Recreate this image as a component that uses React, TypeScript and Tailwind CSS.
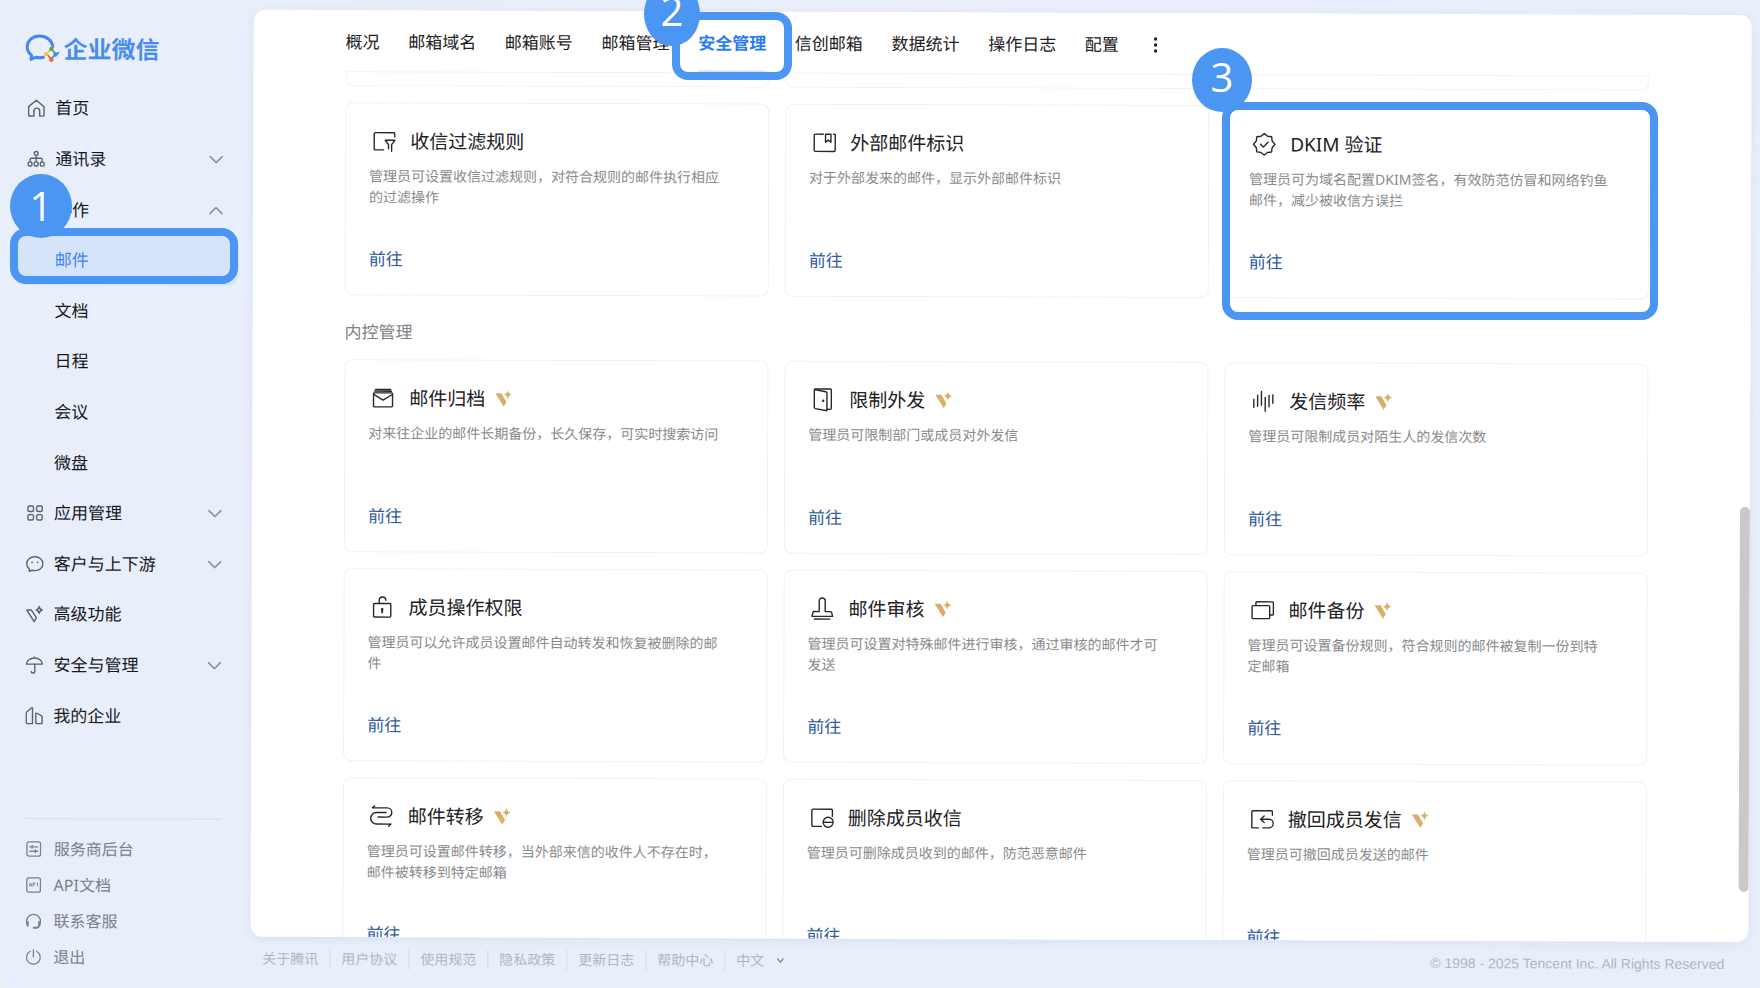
import type { ReactNode } from "react";

const FONT = "font-['Noto_Sans','Noto_Sans_CJK_SC',sans-serif]";

/* ---------- icons ---------- */

function Icon24({ children }: { children: ReactNode }) {
  return (
    <svg
      viewBox="0 0 24 24"
      className="size-6 shrink-0"
      fill="none"
      stroke="#24272c"
      strokeWidth="1.4"
      strokeLinecap="round"
      strokeLinejoin="round"
      aria-hidden="true"
    >
      {children}
    </svg>
  );
}

function Icon18({ children }: { children: ReactNode }) {
  return (
    <svg
      viewBox="0 0 18 18"
      className="size-[18px] shrink-0"
      fill="none"
      stroke="#5c636e"
      strokeWidth="1.4"
      strokeLinecap="round"
      strokeLinejoin="round"
      aria-hidden="true"
    >
      {children}
    </svg>
  );
}

function Icon16({ children }: { children: ReactNode }) {
  return (
    <svg
      viewBox="0 0 16 16"
      className="size-4 shrink-0"
      fill="none"
      stroke="#7a828e"
      strokeWidth="1.3"
      strokeLinecap="round"
      strokeLinejoin="round"
      aria-hidden="true"
    >
      {children}
    </svg>
  );
}

function GoldV() {
  return (
    <svg viewBox="0 0 17 19" className="h-[19px] w-[17px] shrink-0" fill="#d9ae68" aria-hidden="true">
      <path d="M0 3.6h6l5.200 8.800-2.900 4.500z" />
      <path d="M12.500 0c.5 3 1.500 4.300 4.500 4.900-3 .6-4 1.900-4.500 4.900-.5-3-1.500-4.300-4.500-4.900 3-.6 4-1.900 4.500-4.900z" />
    </svg>
  );
}

function Chevron({ up = false }: { up?: boolean }) {
  return (
    <svg
      viewBox="0 0 14 8"
      className="ml-auto h-2 w-3.5"
      fill="none"
      stroke="#8f96a1"
      strokeWidth="1.700"
      strokeLinecap="round"
      strokeLinejoin="round"
      aria-hidden="true"
    >
      <path d={up ? "M1 7l6-6 6 6" : "M1 1l6 6 6-6"} />
    </svg>
  );
}

function Logo() {
  return (
    <svg viewBox="0 0 34 29" className="h-[29px] w-[34px]" fill="none" aria-hidden="true">
      <path
        d="M27.2 12.3C26.4 6.3 20.9 2 14 2 7 2 1.600 6.800 1.600 12.800c0 3.500 1.800 6.500 4.500 8.500L5.500 25.400l4.600-2.200c1.300.3 2.500.5 3.900.5 1.400 0 2.700-.2 3.900-.5"
        stroke="#4489ee"
        strokeWidth="3"
        strokeLinecap="round"
        strokeLinejoin="round"
      />
      <g strokeWidth="1.700" strokeLinecap="round">
        <path d="M26.500 15.800l3 2.900" stroke="#4caf3c" />
        <path d="M29.700 20.600l-2.900 3" stroke="#4489ee" />
        <path d="M25.300 24.200l-2.900-3" stroke="#f06a35" />
        <path d="M22 18.700l2.800-2.800" stroke="#f8c044" />
      </g>
      <circle cx="25.800" cy="14.800" r="2.200" fill="#4caf3c" />
      <path d="M28 19.800l5.600-1.700-3.400 4.200z" fill="#4489ee" stroke="#4489ee" strokeLinejoin="round" />
      <circle cx="25.800" cy="25.500" r="2.300" fill="#f06a35" />
      <circle cx="20.300" cy="19.900" r="2.100" fill="#f8c044" />
    </svg>
  );
}

const sideIcons = {
  home: (
    <Icon18>
      <path d="M1.300 7.600 9 1.200l7.700 6.400v8.800a.6.600 0 0 1-.6.600h-3.700v-5a2.900 2.900 0 0 0-5.800 0" />
      <path d="M6.600 12v5H1.900a.6.600 0 0 1-.6-.6V7.600" />
    </Icon18>
  ),
  org: (
    <Icon18>
      <circle cx="9" cy="3.400" r="1.900" />
      <path d="M9 5.300v5.500M3 10.800V9.300c0-.7.400-1.100 1.100-1.100h9.800c.7 0 1.100.4 1.100 1.100v1.500" />
      <rect x="1" y="12" width="3.800" height="4" rx="1.200" />
      <rect x="7.100" y="12" width="3.800" height="4" rx="1.200" />
      <rect x="13.200" y="12" width="3.800" height="4" rx="1.200" />
    </Icon18>
  ),
  people: (
    <Icon18>
      <path d="M2 4h14M2 9h14M2 14h14" />
    </Icon18>
  ),
  apps: (
    <Icon18>
      <rect x="2" y="2" width="5.600" height="5.400" rx="1.500" />
      <rect x="10.700" y="2" width="5.600" height="5.400" rx="1.500" />
      <rect x="2" y="10.600" width="5.600" height="5.400" rx="1.500" />
      <rect x="10.700" y="10.600" width="5.600" height="5.400" rx="1.500" />
    </Icon18>
  ),
  chat: (
    <Icon18>
      <path d="M3.600 16.200V14C2 12.800 1 11 1 8.700 1 4.700 4.400 1.700 9 1.700s8.200 3 8.200 7-3.600 6.900-8.200 6.900c-1 0-1.800-.1-2.700-.4z" />
      <circle cx="6.300" cy="7.300" r=".9" fill="#5c636e" stroke="none" />
      <circle cx="11.900" cy="7.300" r=".9" fill="#5c636e" stroke="none" />
    </Icon18>
  ),
  vip: (
    <Icon18>
      <path d="M1.200 5h4.600l5 7.500-2.200 4z" />
      <path d="M13.600 1.500c.3 2 .9 2.900 3 3.400-2.100.5-2.700 1.400-3 3.400-.3-2-.9-2.900-3-3.400 2.100-.5 2.700-1.400 3-3.400z" />
    </Icon18>
  ),
  umbrella: (
    <Icon18>
      <path d="M.9 8C1.200 4.500 4.700 2 9 2s7.800 2.500 8.100 6zM9 .9V2M9.400 8v7.500c0 .9-.7 1.500-1.700 1.500s-1.800-.6-1.800-1.500" />
    </Icon18>
  ),
  buildings: (
    <Icon18>
      <path d="M7.300 16.600H1.900c-.5 0-.9-.4-.9-.9V6.200c0-.5.200-.9.500-1.200L6.200.9c.5-.4 1.100-.1 1.100.5z" />
      <path d="M10.600 6.800v9c0 .5.400.8.800.8h4.700c.5 0 .8-.3.800-.8V9.900c0-.5-.2-.9-.6-1.100l-4.500-2.600c-.6-.3-1.200 0-1.200.6z" />
    </Icon18>
  ),
  sliders: (
    <Icon16>
      <rect x="1.200" y=".9" width="13.600" height="14.200" rx="2" />
      <path d="M4 5.800h8M4 10.200h8M6.300 4.300v3M9.700 8.700v3" />
    </Icon16>
  ),
  api: (
    <Icon16>
      <rect x="1.200" y=".9" width="13.600" height="14.200" rx="2" />
      <path d="M3.700 9l1.200-3.300L6.100 9M4.100 8h1.600M7.500 9V5.700h1c1.300 0 1.300 2 0 2h-1M11.800 5.700V9" strokeWidth=".9" />
    </Icon16>
  ),
  headset: (
    <Icon16>
      <path d="M1.800 12.400C1.300 11.300 1 10 1 8.600 1 4.600 4 1.400 8 1.400s7 3.200 7 7.200c0 1.400-.3 2.700-.8 3.800" />
      <path d="M2.400 8.800v3.800M13.600 8.800v3.400c0 1.700-1.500 2.500-3.200 2.500" strokeWidth="1.800" />
      <path d="M8.200 14.700h2" strokeWidth="1.800" />
    </Icon16>
  ),
  power: (
    <Icon16>
      <path d="M8 .8v7M4.800 2.200A6.900 6.900 0 1 0 11.200 2.200" />
    </Icon16>
  ),
};

const cardIcons = {
  filter: (
    <Icon24>
      <path d="M11.500 20.600H3a1 1 0 0 1-1-1V4.400a1 1 0 0 1 1-1h18.500a1 1 0 0 1 1 1v3.200" />
      <path d="M16.300 19.500v-4.200L13 11h9.600l-3.200 4.300V22" />
    </Icon24>
  ),
  mark: (
    <Icon24>
      <path d="M11 3.400H3a1 1 0 0 0-1 1v15.200a1 1 0 0 0 1 1h19a1 1 0 0 0 1-1V4.400a1 1 0 0 0-1-1h-.6" />
      <path d="M13.300 3.400h5.400v8.100L16 9.300l-2.700 2.200z" />
    </Icon24>
  ),
  badge: (
    <Icon24>
      <path d="M12 1.300l3.300 2.600 4.100.5.500 4.200 2.800 3.400-2.800 3.400-.5 4.200-4.100.5L12 22.700l-3.300-2.600-4.100-.5-.5-4.200L1.300 12l2.800-3.400.5-4.200 4.100-.5z" />
      <path d="M8.400 12l2.700 2.600 4.800-4.600" />
    </Icon24>
  ),
  archive: (
    <Icon24>
      <rect x="2.200" y="6.600" width="19" height="14" rx=".8" />
      <path d="M2.400 8.200l9.300 5.600L21 8.200M4.200 3.200h15M3.200 4.900h17" />
    </Icon24>
  ),
  door: (
    <Icon24>
      <path d="M3.500 1.200H19a1 1 0 0 1 1 1v18.300a1 1 0 0 1-1 1h-3.200" />
      <path d="M3 1.700l11.400 2.200c.8.200 1.200.6 1.200 1.400v17.600l-11.400-2c-.8-.2-1.200-.6-1.200-1.400z" />
      <circle cx="11.900" cy="13" r="1.200" fill="#24272c" stroke="none" />
    </Icon24>
  ),
  bars: (
    <Icon24>
      <path d="M2.500 10v8M6.300 6v11M10.100 2v14M13.900 8v14M17.700 6v11.500M21.500 5.500V14" />
    </Icon24>
  ),
  lock: (
    <Icon24>
      <rect x="3" y="8.200" width="17.200" height="13.600" rx="1" />
      <path d="M8.600 8V5a3.300 3.300 0 0 1 6.600 0" />
      <path d="M11.600 14.800v2.400" strokeWidth="1.800" />
      <circle cx="11.600" cy="14" r="1.300" fill="#24272c" stroke="none" />
    </Icon24>
  ),
  stamp: (
    <Icon24>
      <path d="M8.600 14.800V4.200a3 3 0 0 1 6 0v10.600h5.300c.6 0 .9.300 1.100.8l1 3.900H1.400l1-3.900c.1-.5.500-.8 1.100-.8z" />
      <path d="M3.800 22.300h15.600" />
    </Icon24>
  ),
  backup: (
    <Icon24>
      <rect x="1.500" y="7.300" width="17.600" height="13" rx=".9" />
      <path d="M5.300 7.200V4.400a.9.900 0 0 1 .9-.9h15.700a.9.900 0 0 1 .9.900v11.300a.9.900 0 0 1-.9.900h-2.700" />
    </Icon24>
  ),
  transfer: (
    <Icon24>
      <path d="M2.500 3.600h14.800a4.600 4.600 0 0 1 0 9.200H8.200M4.800 1.600l-2.300 2" />
      <path d="M16.200 8.200H6.600a5.800 5.800 0 0 0 0 11.600H21M18.800 21.900l2.300-2.100" />
    </Icon24>
  ),
  remove: (
    <Icon24>
      <path d="M11.500 20.600H3a1 1 0 0 1-1-1V4.400a1 1 0 0 1 1-1h18.500a1 1 0 0 1 1 1v6" />
      <circle cx="18.300" cy="16.500" r="5" />
      <path d="M13.500 16.500h9.600" />
    </Icon24>
  ),
  recall: (
    <Icon24>
      <path d="M8.500 20.600H3a1 1 0 0 1-1-1V4.400a1 1 0 0 1 1-1h18.500a1 1 0 0 1 1 1V8" />
      <path d="M14.300 8.600l-3.600 3.300 3.600 3.300M10.900 11.900h8.200a4.200 4.200 0 0 1 0 8.600h-6" />
    </Icon24>
  ),
};

/* ---------- data ---------- */

type SideItem = {
  label: string;
  icon?: keyof typeof sideIcons;
  chevron?: "up" | "down";
  active?: boolean;
};

const sideItems: SideItem[] = [
  { label: "首页", icon: "home" },
  { label: "通讯录", icon: "org", chevron: "down" },
  { label: "协作", icon: "people", chevron: "up" },
  { label: "邮件", active: true },
  { label: "文档" },
  { label: "日程" },
  { label: "会议" },
  { label: "微盘" },
  { label: "应用管理", icon: "apps", chevron: "down" },
  { label: "客户与上下游", icon: "chat", chevron: "down" },
  { label: "高级功能", icon: "vip" },
  { label: "安全与管理", icon: "umbrella", chevron: "down" },
  { label: "我的企业", icon: "buildings" },
];

const sideLinks: { label: string; icon: keyof typeof sideIcons }[] = [
  { label: "服务商后台", icon: "sliders" },
  { label: "API文档", icon: "api" },
  { label: "联系客服", icon: "headset" },
  { label: "退出", icon: "power" },
];

const tabs = ["概况", "邮箱域名", "邮箱账号", "邮箱管理", "安全管理", "信创邮箱", "数据统计", "操作日志", "配置"];

type CardData = { title: string; desc: string; icon: keyof typeof cardIcons; vip?: boolean };

const filterCards: CardData[] = [
  { title: "收信过滤规则", desc: "管理员可设置收信过滤规则，对符合规则的邮件执行相应的过滤操作", icon: "filter" },
  { title: "外部邮件标识", desc: "对于外部发来的邮件，显示外部邮件标识", icon: "mark" },
  { title: "DKIM 验证", desc: "管理员可为域名配置DKIM签名，有效防范仿冒和网络钓鱼邮件，减少被收信方误拦", icon: "badge" },
];

const controlCards: CardData[] = [
  { title: "邮件归档", desc: "对来往企业的邮件长期备份，长久保存，可实时搜索访问", icon: "archive", vip: true },
  { title: "限制外发", desc: "管理员可限制部门或成员对外发信", icon: "door", vip: true },
  { title: "发信频率", desc: "管理员可限制成员对陌生人的发信次数", icon: "bars", vip: true },
  { title: "成员操作权限", desc: "管理员可以允许成员设置邮件自动转发和恢复被删除的邮件", icon: "lock" },
  { title: "邮件审核", desc: "管理员可设置对特殊邮件进行审核，通过审核的邮件才可发送", icon: "stamp", vip: true },
  { title: "邮件备份", desc: "管理员可设置备份规则，符合规则的邮件被复制一份到特定邮箱", icon: "backup", vip: true },
  { title: "邮件转移", desc: "管理员可设置邮件转移，当外部来信的收件人不存在时，邮件被转移到特定邮箱", icon: "transfer", vip: true },
  { title: "删除成员收信", desc: "管理员可删除成员收到的邮件，防范恶意邮件", icon: "remove" },
  { title: "撤回成员发信", desc: "管理员可撤回成员发送的邮件", icon: "recall", vip: true },
];

const footerLinks = ["关于腾讯", "用户协议", "使用规范", "隐私政策", "更新日志", "帮助中心"];

/* ---------- parts ---------- */

function Sidebar() {
  return (
    <aside className="flex w-[252px] shrink-0 flex-col px-3 pb-2.5">
      <a href="#" className="mt-[37px] ml-3 flex h-[29px] items-center gap-1 text-[24px] leading-[29px] font-bold text-[#4a8cee]">
        <Logo />
        企业微信
      </a>
      <nav aria-label="主导航" className="mt-5 flex h-[658px] flex-col">
        {sideItems.map((item) => (
          <a
            key={item.label}
            href="#"
            className={
              item.active
                ? "mr-0.5 flex flex-1 items-center gap-2.5 rounded-xl bg-[#d5e4f9] pr-4 pl-3.5 text-[17px] leading-6 text-[#3d84f0]"
                : "mr-0.5 flex flex-1 items-center gap-2.5 pr-4 pl-3.5 text-[17px] leading-6 text-[#17191d]"
            }
          >
            {item.icon ? sideIcons[item.icon] : <span className="w-[18px]" />}
            <span>{item.label}</span>
            {item.chevron && <Chevron up={item.chevron === "up"} />}
          </a>
        ))}
      </nav>
      <ul className="mt-auto mr-[18px] ml-[15px] border-t border-[#d9e0ec] pt-3">
        {sideLinks.map((link) => (
          <li key={link.label}>
            <a href="#" className="flex h-9 items-center gap-3 text-[16px] leading-6 text-[#7a818c]">
              {sideIcons[link.icon]}
              {link.label}
            </a>
          </li>
        ))}
      </ul>
    </aside>
  );
}

function Tabs() {
  return (
    <header className="mr-[102px] ml-[92px] h-[62px] shrink-0 border-b border-[#f0f1f3] text-[17px] leading-6 whitespace-nowrap text-[#1d2024]">
      <div className="flex h-full w-[818px] items-stretch justify-between pt-0.5">
        {tabs.map((tab) => (
          <a
            key={tab}
            href="#"
            className={
              tab === "安全管理"
                ? "flex items-center border-b-2 border-[#d3e3fb] pt-0.5 font-bold text-[#2b7bf3]"
                : "flex items-center"
            }
          >
            {tab}
          </a>
        ))}
        <button type="button" aria-label="更多" className="flex items-center">
          <svg viewBox="0 0 16 16" className="size-4" fill="#1d2024" aria-hidden="true">
            <circle cx="8" cy="2" r="1.700" />
            <circle cx="8" cy="8" r="1.700" />
            <circle cx="8" cy="14" r="1.700" />
          </svg>
        </button>
      </div>
    </header>
  );
}

function Card({ title, desc, icon, vip }: CardData) {
  return (
    <article className="flex h-[193px] flex-col rounded-lg border border-[#f0f1f2] pt-6 pr-[38px] pb-[23px] pl-[23px]">
      <h3 className="flex items-center pl-[3px] text-[19px] leading-7 text-[#1d2025]">
        {cardIcons[icon]}
        <span className="mr-2.5 ml-3.5">{title}</span>
        {vip && <GoldV />}
      </h3>
      <p className="mt-2.5 text-[14px] leading-[21px] text-[#888a8d]">{desc}</p>
      <a href="#" className="mt-auto self-start text-[17px] leading-6 text-[#2e5b9e]">
        前往
      </a>
    </article>
  );
}

function Footer() {
  return (
    <footer className="flex h-[49px] shrink-0 items-center pr-6 pb-1.5 pl-3 text-[14px] leading-5 text-[#b0b7c4]">
      {footerLinks.map((link) => (
        <a key={link} href="#" className="mr-[11px] border-r border-[#d3dae6] pr-[11px]">
          {link}
        </a>
      ))}
      <button type="button" className="flex items-center gap-3">
        中文
        <svg viewBox="0 0 8 6" className="h-1.5 w-2" fill="none" stroke="#7f8793" strokeWidth="1.400" aria-hidden="true">
          <path d="M1 1l3 3.600L7 1" />
        </svg>
      </button>
      <p className="ml-auto font-['Liberation_Sans',sans-serif]">
        © 1998 - 2025 Tencent Inc. All Rights Reserved
      </p>
    </footer>
  );
}

function Annotations() {
  const box = "absolute rounded-2xl border-8 border-[#4b95f3]";
  const dot =
    "absolute flex h-16 items-center justify-center rounded-[50%] bg-[#4b95f3] font-['Open_Sans',sans-serif] text-[40px] leading-none text-white";
  return (
    <div className="pointer-events-none absolute inset-0">
      <div className={`${box} top-[228px] left-[10px] h-14 w-[228px]`} />
      <div className={`${dot} top-[174px] left-[10px] w-[62px]`}>1</div>
      <div className={`${box} top-3 left-[672px] h-[68px] w-[120px]`} />
      <div className={`${dot} -top-[18px] left-[644px] w-14 pb-1.5`}>2</div>
      <div className={`${box} top-[102px] left-[1222px] h-[218px] w-[436px]`} />
      <div className={`${dot} top-12 left-[1192px] w-[60px] pb-1.5`}>3</div>
    </div>
  );
}

export default function App() {
  return (
    <div className={`relative h-screen overflow-hidden bg-[#eeeeec] ${FONT}`}>
      <div className="flex h-full rotate-[0.2deg] rounded-xl bg-[#e8eefa] shadow-[0_0_0_3px_#e8eefa]">
        <Sidebar />
        <div className="flex min-w-0 flex-1 flex-col pt-3 pr-2.5">
          <main className="flex min-h-0 flex-1 flex-col overflow-hidden rounded-xl bg-white shadow-[0_2px_8px_rgba(90,110,150,0.1)]">
            <Tabs />
            <div className="flex min-h-0 flex-1">
              <div className="min-w-0 flex-1 overflow-hidden px-[92px]">
                <div className="grid grid-cols-3 gap-4">
                  <div className="h-3.5 rounded-b-lg border-x border-b border-[#f0f1f2]" />
                  <div className="h-3.5 rounded-b-lg border-x border-b border-[#f0f1f2]" />
                  <div className="h-3.5 rounded-b-lg border-x border-b border-[#f0f1f2]" />
                  {filterCards.map((card) => (
                    <Card key={card.title} {...card} />
                  ))}
                </div>
                <h2 className="pt-[25px] pb-[15px] text-[17px] leading-6 text-[#808287]">内控管理</h2>
                <div className="grid grid-cols-3 gap-4">
                  {controlCards.map((card) => (
                    <Card key={card.title} {...card} />
                  ))}
                </div>
              </div>
              <div className="flex w-2.5 flex-col" aria-hidden="true">
                <div className="flex-[430]" />
                <div className="flex-[385] rounded-full bg-[#c9c9c9]" />
                <div className="flex-[50]" />
              </div>
            </div>
          </main>
          <Footer />
        </div>
      </div>
      <Annotations />
    </div>
  );
}
